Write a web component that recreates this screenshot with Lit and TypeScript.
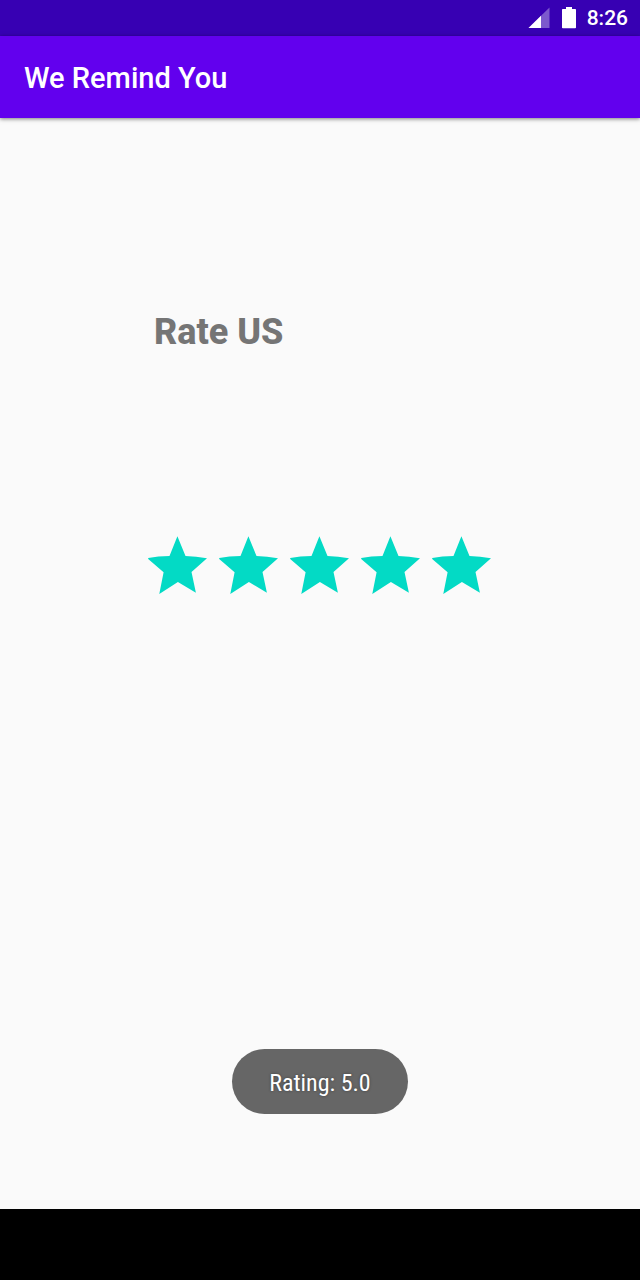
import { LitElement, html, css } from "lit";
import { customElement, state } from "lit/decorators.js";

@customElement("status-bar")
class StatusBar extends LitElement {
  static styles = css`
    :host {
      display: flex;
      justify-content: flex-end;
      align-items: center;
      height: 36px;
      padding-right: 12px;
      background: #3700b3;
      color: #fff;
      font: 500 21px/36px Roboto, sans-serif;
    }
    .icon {
      display: block;
      height: 36px;
    }
    .battery {
      margin: 0 11px 0 12px;
    }
  `;

  render() {
    return html`
      <svg class="icon" width="22" height="36" viewBox="0 0 22 36" aria-label="Signal" role="img">
        <path d="M.500 28 21.500 7.500V28Z" fill="#fff" fill-opacity=".35" />
        <path d="M.500 28 13 15.800V28Z" fill="#fff" />
      </svg>
      <svg class="icon battery" width="14" height="36" viewBox="0 0 14 36" aria-label="Battery" role="img">
        <path d="M4 7h6v2h3.200q.8 0 .8.800V27.500q0 .800-.800.800H.800Q0 28.300 0 27.500V9.800Q0 9 .800 9H4Z" fill="#fff" />
      </svg>
      <time>8:26</time>
    `;
  }
}

@customElement("rating-bar")
class RatingBar extends LitElement {
  static styles = css`
    :host {
      display: block;
    }
    .stars {
      display: flex;
      margin: 0;
      padding: 0;
      border: 0;
      min-width: 0;
    }
    .star {
      display: grid;
      cursor: pointer;
    }
    .star > * {
      grid-area: 1 / 1;
    }
    .choice {
      appearance: none;
      margin: 0;
      cursor: pointer;
    }
    .shape {
      display: block;
      fill: #bdbdbd;
      pointer-events: none;
    }
    .filled {
      fill: #03dac5;
    }
  `;

  @state() private value = 5;

  render() {
    return html`
      <fieldset class="stars" aria-label="Rating">
        ${[1, 2, 3, 4, 5].map(
          (n) => html`
            <label class="star">
              <input
                class="choice"
                type="radio"
                name="rating"
                aria-label="${n} of 5"
                .checked=${n === this.value}
                @change=${() => this.choose(n)}
              />
              <svg class="shape ${n <= this.value ? "filled" : ""}" width="71" height="71" viewBox="0 0 71 71" aria-hidden="true">
                <path
                  d="M35.400 6.300 43.500 26Q54 26.200 65 28.200L49.500 41.900 53.900 62.800 35.900 52 17.300 64 21.600 42.200 6.200 29V28Q16 26.200 27.500 26Z"
                />
              </svg>
            </label>
          `
        )}
      </fieldset>
    `;
  }

  private choose(n: number) {
    this.value = n;
    this.dispatchEvent(new CustomEvent("rate", { detail: n, bubbles: true, composed: true }));
  }
}

@customElement("app-root")
class AppRoot extends LitElement {
  static styles = css`
    :host {
      display: flex;
      flex-direction: column;
      min-height: 100vh;
      background: #fafafa;
      font-family: Roboto, sans-serif;
    }
    .app-bar {
      position: relative;
      display: flex;
      align-items: center;
      height: 82px;
      padding: 2px 24px 0;
      box-sizing: border-box;
      background: #6200ee;
      color: #fff;
      box-shadow: 0 1px 4px rgba(0, 0, 0, 0.5);
    }
    .title {
      margin: 0;
      font-size: 29px;
      font-weight: 500;
      line-height: 36px;
    }
    .content {
      position: relative;
      flex: 1;
      display: flex;
      flex-direction: column;
      align-items: center;
      padding-top: 190px;
    }
    .panel {
      width: 356px;
    }
    .heading {
      margin: 0 0 174px 12px;
      color: #757575;
      font-size: 36px;
      font-weight: 800;
      line-height: 48px;
    }
    .toast {
      position: absolute;
      bottom: 95px;
      padding: 3px 37px 0;
      border-radius: 33px;
      background: #666;
      color: #fff;
      font-family: "Roboto Condensed", Roboto, sans-serif;
      font-size: 24px;
      line-height: 62px;
      white-space: nowrap;
      text-shadow: 0 0 3px rgba(0, 0, 0, 0.4);
    }
    .nav-bar {
      height: 71px;
      background: #000;
    }
  `;

  @state() private rating = 5;

  render() {
    return html`
      <status-bar></status-bar>
      <header class="app-bar"><h1 class="title">We Remind You</h1></header>
      <main class="content">
        <div class="panel">
          <h2 class="heading">Rate US</h2>
          <rating-bar @rate=${(e: CustomEvent<number>) => (this.rating = e.detail)}></rating-bar>
        </div>
        <div class="toast" role="status">Rating: ${this.rating.toFixed(1)}</div>
      </main>
      <footer class="nav-bar"></footer>
    `;
  }
}
